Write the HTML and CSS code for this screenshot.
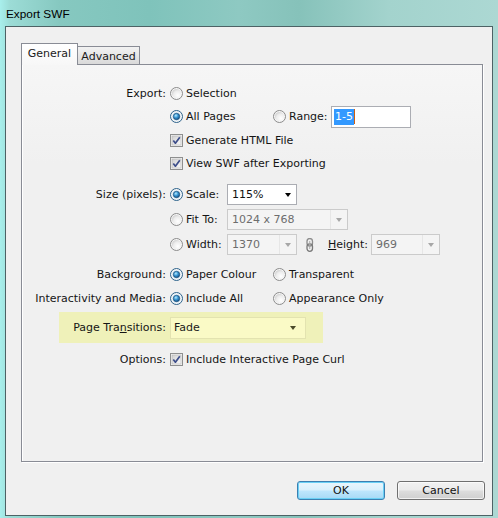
FILE: index.html
```html
<!DOCTYPE html>
<html>
<head>
<meta charset="utf-8">
<link rel="stylesheet" href="styles.css">
</head>
<body>
<svg class="defs" width="0" height="0">
  <defs>
    <radialGradient id="rfill" cx="0.65" cy="0.7" r="0.8">
      <stop offset="0" stop-color="#ffffff"/>
      <stop offset="0.6" stop-color="#ececec"/>
      <stop offset="1" stop-color="#c9c9c9"/>
    </radialGradient>
    <radialGradient id="rdot" cx="0.4" cy="0.35" r="0.7">
      <stop offset="0" stop-color="#b7ecff"/>
      <stop offset="0.45" stop-color="#3d9ad6"/>
      <stop offset="1" stop-color="#0f4a7e"/>
    </radialGradient>
    <linearGradient id="cfill" x1="0" y1="0" x2="1" y2="1">
      <stop offset="0" stop-color="#cfcfcf"/>
      <stop offset="1" stop-color="#fbfbfb"/>
    </linearGradient>
    <symbol id="radio-off" viewBox="0 0 13 13">
      <circle cx="6.5" cy="6.5" r="6" fill="#f6f6f6" stroke="#8b8b8b"/>
      <circle cx="6.5" cy="6.5" r="4.6" fill="url(#rfill)"/>
    </symbol>
    <symbol id="radio-on" viewBox="0 0 13 13">
      <circle cx="6.5" cy="6.5" r="6" fill="#f6f6f6" stroke="#2c628b"/>
      <circle cx="6.5" cy="6.5" r="4.6" fill="#e3eef6"/>
      <circle cx="6.5" cy="6.5" r="3.2" fill="url(#rdot)" stroke="#1a4f7a" stroke-width="0.7"/>
    </symbol>
    <symbol id="check" viewBox="0 0 13 13">
      <rect x="0.5" y="0.5" width="12" height="12" fill="#f4f4f4" stroke="#8e8f8f"/>
      <rect x="2" y="2" width="9" height="9" fill="url(#cfill)" stroke="#b5b5b5" stroke-width="0.6"/>
      <path d="M3.3 6.4 L5.4 9.2 L9.8 3.2" fill="none" stroke="#3d4e8a" stroke-width="1.7" stroke-linejoin="round"/>
    </symbol>
  </defs>
</svg>

<div class="window">
  <div class="titlebar">Export SWF</div>
  <div class="client">
    <div class="tabs">
      <div class="tab active">General</div>
      <div class="tab">Advanced</div>
    </div>
    <div class="panel">
      <div class="row">
        <div class="label">Export:</div>
        <div class="ctrl">
          <span class="opt"><svg class="ico"><use href="#radio-off"/></svg>Selection</span>
        </div>
      </div>
      <div class="row">
        <div class="label"></div>
        <div class="ctrl">
          <span class="opt w103"><svg class="ico"><use href="#radio-on"/></svg>All Pages</span>
          <span class="opt w58"><svg class="ico"><use href="#radio-off"/></svg>Range:</span>
          <span class="textbox"><span class="sel">1-5</span><span class="caret"></span></span>
        </div>
      </div>
      <div class="row mt1">
        <div class="label"></div>
        <div class="ctrl">
          <span class="opt"><svg class="ico"><use href="#check"/></svg>Generate HTML File</span>
        </div>
      </div>
      <div class="row">
        <div class="label"></div>
        <div class="ctrl">
          <span class="opt"><svg class="ico"><use href="#check"/></svg>View SWF after Exporting</span>
        </div>
      </div>
      <div class="row mt8">
        <div class="label">Size (pixels):</div>
        <div class="ctrl">
          <span class="opt w57"><svg class="ico"><use href="#radio-on"/></svg>Scale:</span>
          <span class="select w70"><span class="val">115%</span><span class="arrow dark"></span></span>
        </div>
      </div>
      <div class="row mt2">
        <div class="label"></div>
        <div class="ctrl">
          <span class="opt w57"><svg class="ico"><use href="#radio-off"/></svg>Fit To:</span>
          <span class="select disabled w121"><span class="val">1024 x 768</span><span class="btnpart"><span class="arrow"></span></span></span>
        </div>
      </div>
      <div class="row mt2">
        <div class="label"></div>
        <div class="ctrl">
          <span class="opt w57"><svg class="ico"><use href="#radio-off"/></svg>Width:</span>
          <span class="select disabled w70"><span class="val">1370</span><span class="btnpart"><span class="arrow"></span></span></span>
          <svg class="link" viewBox="0 0 8 14" width="8" height="14">
            <rect x="1" y="0.5" width="5.5" height="7.5" rx="2.7" fill="none" stroke="#8d8d8d" stroke-width="1.3"/>
            <rect x="1" y="5.8" width="5.5" height="7.5" rx="2.7" fill="none" stroke="#7a7a7a" stroke-width="1.3"/>
            <line x1="3.75" y1="3" x2="3.75" y2="11" stroke="#a8a8a8" stroke-width="1"/>
          </svg>
          <span class="hlabel"><u>H</u>eight:</span>
          <span class="select disabled w69"><span class="val">969</span><span class="btnpart"><span class="arrow"></span></span></span>
        </div>
      </div>
      <div class="row mt7">
        <div class="label">Background:</div>
        <div class="ctrl">
          <span class="opt w103"><svg class="ico"><use href="#radio-on"/></svg>Paper Colour</span>
          <span class="opt"><svg class="ico"><use href="#radio-off"/></svg>Transparent</span>
        </div>
      </div>
      <div class="row mt1">
        <div class="label">Interactivity and Media:</div>
        <div class="ctrl">
          <span class="opt w103"><svg class="ico"><use href="#radio-on"/></svg>Include All</span>
          <span class="opt"><svg class="ico"><use href="#radio-off"/></svg>Appearance Only</span>
        </div>
      </div>
      <div class="row highlight mt2">
        <div class="label">Page Tra<u>n</u>sitions:</div>
        <div class="ctrl">
          <span class="select yellow w136"><span class="val">Fade</span><span class="arrow olive"></span></span>
        </div>
      </div>
      <div class="row mt5">
        <div class="label">Options:</div>
        <div class="ctrl">
          <span class="opt"><svg class="ico"><use href="#check"/></svg>Include Interactive Page Curl</span>
        </div>
      </div>
    </div>
    <div class="buttons">
      <div class="btn default">OK</div>
      <div class="btn">Cancel</div>
    </div>
  </div>
</div>
</body>
</html>
```

FILE: styles.css
```css
* { box-sizing: border-box; }
html, body { margin: 0; padding: 0; }
body {
  width: 498px;
  height: 518px;
  overflow: hidden;
  font-family: "DejaVu Sans", sans-serif;
  font-size: 11px;
  color: #151515;
}
.defs { position: absolute; width: 0; height: 0; }

.window {
  width: 498px;
  height: 518px;
  display: flex;
  flex-direction: column;
  padding: 0 5px 2px 5px;
  background: linear-gradient(90deg, #a8efec 0, #9cdcd6 2%, #86c8c0 12%, #7fc3bb 30%, #8ec9c2 48%, #86c2ba 60%, #a3d3cd 78%, #acd8d3 100%);
}
.titlebar {
  height: 26px;
  display: flex;
  align-items: center;
  padding-left: 1px;
  padding-top: 1px;
  font-family: "Liberation Sans", sans-serif;
  font-size: 11.8px;
  color: #000;
}
.client {
  flex: 1;
  background: #f0f0f0;
  border: 1px solid #4d6265;
  padding: 16px 7px 0 15px;
  display: flex;
  flex-direction: column;
}

.tabs {
  display: flex;
  align-items: flex-end;
  height: 22px;
  margin-bottom: -1px;
  position: relative;
  z-index: 1;
}
.tab {
  height: 19px;
  width: 62px;
  border: 1px solid #898c95;
  border-left: none;
  background: linear-gradient(#f2f2f2, #e6e6e6 50%, #d9d9d9);
  display: flex;
  align-items: center;
  justify-content: center;
  padding-top: 1px;
  color: #1a1a1a;
}
.tab.active {
  height: 22px;
  width: 57px;
  border-left: 1px solid #898c95;
  border-bottom: none;
  background: linear-gradient(#ffffff, #f7f7f7);
  padding-top: 0;
  padding-bottom: 2px;
}

.panel {
  width: 462px;
  height: 398px;
  border: 1px solid #898c95;
  box-shadow: inset 1px 0 #fff, 1px 1px #fff;
  background: linear-gradient(#f6f6f6, #f0f0f0 25%);
  padding-top: 17px;
  display: flex;
  flex-direction: column;
}

.row {
  display: grid;
  grid-template-columns: 144px 1fr;
  column-gap: 4px;
  align-items: center;
  height: 23px;
}
.mt1 { margin-top: 1px; }
.mt2 { margin-top: 2px; }
.mt5 { margin-top: 5px; }
.mt7 { margin-top: 7px; }
.mt8 { margin-top: 8px; }

.label { text-align: right; white-space: nowrap; }
.ctrl { display: flex; align-items: center; white-space: nowrap; }

.opt { display: inline-flex; align-items: center; gap: 3px; }
.ico { width: 13px; height: 13px; flex: none; }
.w103 { width: 103px; }
.w58 { width: 58px; }
.w57 { width: 57px; }
.w70 { width: 70px; }
.w69 { width: 69px; }
.w121 { width: 121px; }
.w136 { width: 136px; }

.textbox {
  width: 80px;
  height: 22px;
  border: 1px solid #abadb3;
  background: #fff;
  display: inline-flex;
  align-items: center;
  padding-left: 2px;
}
.sel {
  background: #3399ff;
  color: #fff;
  padding: 1px 1px;
  line-height: 14px;
}
.caret { width: 1px; height: 15px; background: #d06010; }

.select {
  height: 21px;
  border: 1px solid #abadb3;
  background: #fff;
  display: inline-flex;
  align-items: center;
  justify-content: space-between;
  padding-left: 4px;
  color: #111;
}
.select.disabled {
  border-color: #cbcbcb;
  background: #f4f4f4;
  color: #6d6d6d;
}
.select.yellow {
  height: 22px;
  border-color: #e3e3b0;
  background: #fafac6;
  color: #1a1a1a;
  padding-left: 3px;
}
.btnpart {
  width: 17px;
  height: 100%;
  border-left: 1px solid #e6e6e6;
  display: flex;
  align-items: center;
  justify-content: center;
}
.arrow {
  width: 0;
  height: 0;
  border-left: 3.5px solid transparent;
  border-right: 3.5px solid transparent;
  border-top: 4px solid #a7a7a7;
}
.arrow.dark { border-top-color: #000; margin-right: 5px; }
.arrow.olive { border-top-color: #4a4a2a; margin-right: 9px; }

.link { margin-left: 9px; flex: none; }
.hlabel { margin-left: 14px; margin-right: 3px; }

.highlight {
  margin-left: 37px;
  width: 264px;
  height: 31px;
  grid-template-columns: 107px 1fr;
  background: #eff1b9;
}

.buttons {
  display: flex;
  justify-content: flex-end;
  gap: 12px;
  margin-top: 19px;
}
.btn {
  width: 88px;
  height: 19px;
  border: 1px solid #707070;
  border-radius: 3px;
  background: linear-gradient(#f2f2f2 0, #ebebeb 48%, #dddddd 52%, #cfcfcf 100%);
  box-shadow: inset 0 0 0 1px rgba(255,255,255,0.7);
  display: flex;
  align-items: center;
  justify-content: center;
  color: #111;
}
.btn.default {
  border-color: #3c7fb1;
  background: linear-gradient(#eaf6fd 0, #d9f0fc 48%, #bee6fd 52%, #a7d9f5 100%);
  box-shadow: inset 0 0 0 1px #6ad0f5;
}
```
